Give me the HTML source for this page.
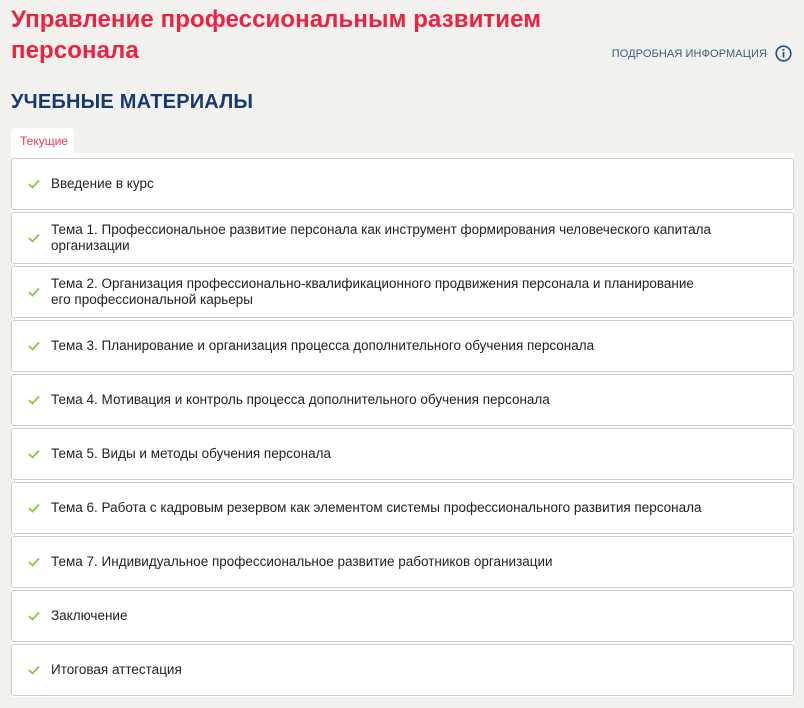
<!DOCTYPE html>
<html><head><meta charset="utf-8">
<style>
*{box-sizing:border-box;margin:0;padding:0}
body{width:804px;height:708px;background:#f2f1ee;font-family:"Liberation Sans","DejaVu Sans",sans-serif;position:relative;overflow:hidden}
h1{position:absolute;left:11px;top:4px;font-size:24px;line-height:31px;font-weight:bold;color:#ee2140;letter-spacing:0.1px}
.info{position:absolute;right:12px;top:45px;font-size:11px;color:#3a5a85;display:flex;align-items:center;gap:8px;letter-spacing:0.1px}
.info svg{display:block}
h2{position:absolute;left:11px;top:91px;font-size:20px;color:#143a70;font-weight:bold;letter-spacing:0.2px}
.tab{position:absolute;left:11px;top:128px;width:63px;height:26px;background:#fff;border-radius:4px 4px 0 0;font-size:12px;color:#ee3a52;padding:6px 0 0 9px}
.wrap{position:absolute;left:11px;top:153px;width:783px;height:544px;background:#fff}
.item{position:absolute;left:0;width:783px;height:52px;border:1px solid #cfcecb;border-radius:3px;background:#fff;display:flex;align-items:center;padding-left:39px;font-size:13.5px;color:#222;line-height:16px}
.item svg{position:absolute;left:16px;top:20px}
</style></head><body>
<h1>Управление профессиональным развитием<br>персонала</h1>
<div class="info">ПОДРОБНАЯ ИНФОРМАЦИЯ
<svg width="17" height="17" viewBox="0 0 17 17"><circle cx="8.5" cy="8.5" r="7.3" fill="none" stroke="#1a4f8c" stroke-width="1.6"/><rect x="7.6" y="7" width="1.8" height="5.5" fill="#1a4f8c"/><rect x="7.6" y="4" width="1.8" height="1.8" fill="#1a4f8c"/></svg></div>
<h2>УЧЕБНЫЕ МАТЕРИАЛЫ</h2>
<div class="tab">Текущие</div>
<div class="wrap">
<div class="item" style="top:5px"><svg width="12" height="10" viewBox="0 0 12 10"><path d="M1 5l3.5 3.5L11 1.5" fill="none" stroke="#8cc63f" stroke-width="1.8"/></svg>Введение в курс</div>
<div class="item" style="top:59px"><svg width="12" height="10" viewBox="0 0 12 10"><path d="M1 5l3.5 3.5L11 1.5" fill="none" stroke="#8cc63f" stroke-width="1.8"/></svg>Тема 1. Профессиональное развитие персонала как инструмент формирования человеческого капитала<br>организации</div>
<div class="item" style="top:113px"><svg width="12" height="10" viewBox="0 0 12 10"><path d="M1 5l3.5 3.5L11 1.5" fill="none" stroke="#8cc63f" stroke-width="1.8"/></svg>Тема 2. Организация профессионально-квалификационного продвижения персонала и планирование<br>его профессиональной карьеры</div>
<div class="item" style="top:167px"><svg width="12" height="10" viewBox="0 0 12 10"><path d="M1 5l3.5 3.5L11 1.5" fill="none" stroke="#8cc63f" stroke-width="1.8"/></svg>Тема 3. Планирование и организация процесса дополнительного обучения персонала</div>
<div class="item" style="top:221px"><svg width="12" height="10" viewBox="0 0 12 10"><path d="M1 5l3.5 3.5L11 1.5" fill="none" stroke="#8cc63f" stroke-width="1.8"/></svg>Тема 4. Мотивация и контроль процесса дополнительного обучения персонала</div>
<div class="item" style="top:275px"><svg width="12" height="10" viewBox="0 0 12 10"><path d="M1 5l3.5 3.5L11 1.5" fill="none" stroke="#8cc63f" stroke-width="1.8"/></svg>Тема 5. Виды и методы обучения персонала</div>
<div class="item" style="top:329px"><svg width="12" height="10" viewBox="0 0 12 10"><path d="M1 5l3.5 3.5L11 1.5" fill="none" stroke="#8cc63f" stroke-width="1.8"/></svg>Тема 6. Работа с кадровым резервом как элементом системы профессионального развития персонала</div>
<div class="item" style="top:383px"><svg width="12" height="10" viewBox="0 0 12 10"><path d="M1 5l3.5 3.5L11 1.5" fill="none" stroke="#8cc63f" stroke-width="1.8"/></svg>Тема 7. Индивидуальное профессиональное развитие работников организации</div>
<div class="item" style="top:437px"><svg width="12" height="10" viewBox="0 0 12 10"><path d="M1 5l3.5 3.5L11 1.5" fill="none" stroke="#8cc63f" stroke-width="1.8"/></svg>Заключение</div>
<div class="item" style="top:491px"><svg width="12" height="10" viewBox="0 0 12 10"><path d="M1 5l3.5 3.5L11 1.5" fill="none" stroke="#8cc63f" stroke-width="1.8"/></svg>Итоговая аттестация</div>
</div>
</body></html>
